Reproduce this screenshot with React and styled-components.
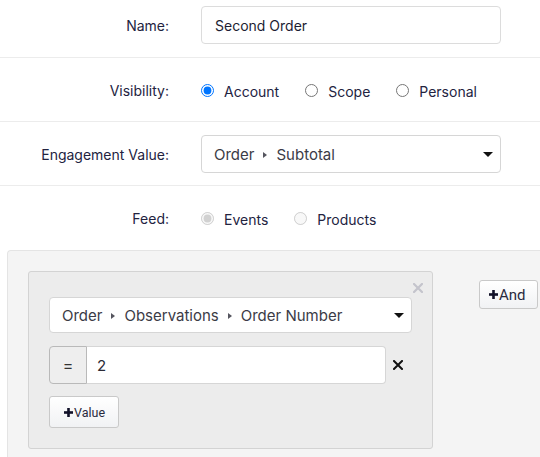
import React from "react";
import styled, { createGlobalStyle } from "styled-components";

const Global = createGlobalStyle`
  html, body { margin: 0; padding: 0; background: #fff; }
  body { font-family: Inter, "Noto Sans", sans-serif; color: #23233f; }
  * { box-sizing: border-box; }
`;

const Page = styled.div`
  width: 540px;
  height: 457px;
  overflow: hidden;
`;

const Row = styled.div`
  display: grid;
  grid-template-columns: 169px 300px;
  column-gap: 32px;
  align-items: center;
  padding: ${(p) => (p.$first ? "6px 0 13px" : p.$last ? "13px 0 13px" : "13px 0 12px")};
  border-bottom: ${(p) => (p.$last ? "none" : "1px solid #ececec")};
`;

const Label = styled.div`
  text-align: right;
  font-size: 14px;
  color: #23233f;
  margin-top: ${(p) => p.$offset || 0}px;
`;

const TextInput = styled.div`
  height: 38px;
  border: 1px solid #dcdcdc;
  border-radius: 4px;
  background: #fff;
  display: flex;
  align-items: center;
  padding: 0 13px;
  font-size: 14px;
  color: #1d1d33;
`;

const Select = styled.div`
  height: ${(p) => p.$h || 38}px;
  width: ${(p) => (p.$w ? `${p.$w}px` : "auto")};
  border: 1px solid #d6d6d6;
  border-radius: 4px;
  background: #fff;
  display: flex;
  align-items: center;
  justify-content: space-between;
  padding: 0 7px 0 12px;
  font-size: 15px;
  color: #3b3b46;
`;

const Path = styled.span`
  display: flex;
  align-items: center;
`;

const Sep = styled.span`
  display: inline-block;
  width: 0;
  height: 0;
  border-top: 3px solid transparent;
  border-bottom: 3px solid transparent;
  border-left: 4px solid #55555f;
  margin: 1px 9px 0 9px;
`;

const Caret = styled.span`
  width: 0;
  height: 0;
  border-left: 5px solid transparent;
  border-right: 5px solid transparent;
  border-top: 5px solid #111;
  margin-top: 1px;
`;

const RadioGroup = styled.div`
  height: 38px;
  display: flex;
  align-items: center;
  gap: 26px;
`;

const Option = styled.label`
  display: flex;
  align-items: center;
  gap: 10px;
  font-size: 14px;
  color: #23233f;
`;

const OptionText = styled.span`
  margin-top: ${(p) => p.$offset || 0}px;
`;

const Radio = styled.input.attrs({ type: "radio" })`
  margin: 0;
  width: 13px;
  height: 13px;
`;

const Section = styled.div`
  margin-left: 7px;
  min-height: 220px;
  background: #f4f4f4;
  border: 1px solid #e4e4e4;
  border-right: none;
  border-radius: 4px 0 0 0;
  padding: 20px;
  display: flex;
  align-items: flex-start;
  gap: 46px;
`;

const Clause = styled.div`
  position: relative;
  width: 405px;
  background: #ececec;
  border: 1px solid #d3d3d3;
  border-radius: 3px;
  padding: 25px 20px 20px;
  display: flex;
  flex-direction: column;
  align-items: flex-start;
`;

const CloseBtn = styled.span`
  position: absolute;
  top: 11px;
  right: 9px;
  display: flex;
`;

const ValueRow = styled.div`
  display: flex;
  align-items: center;
  gap: 7px;
  margin-top: 13px;
`;

const InputGroup = styled.div`
  display: flex;
  width: 337px;
  height: 38px;
`;

const Addon = styled.div`
  width: 38px;
  background: #eeeeee;
  border: 1px solid #b9b9b9;
  border-radius: 4px 0 0 4px;
  display: flex;
  align-items: center;
  justify-content: center;
  font-size: 16px;
  color: #333;
`;

const ValueInput = styled.div`
  flex: 1;
  background: #fff;
  border: 1px solid #d6d6d6;
  border-left: none;
  border-radius: 0 4px 4px 0;
  display: flex;
  align-items: center;
  padding: 0 10px;
  font-size: 15px;
  color: #2b2b36;
`;

const Button = styled.button`
  display: flex;
  align-items: center;
  height: ${(p) => p.$h}px;
  padding: 0 ${(p) => p.$pr}px 0 ${(p) => p.$pl}px;
  margin-top: ${(p) => p.$mt || 0}px;
  background: linear-gradient(#ffffff, #f1f2f4);
  border: 1px solid #c9c9c9;
  border-radius: 3px;
  font-family: Roboto, "Liberation Sans", sans-serif;
  font-size: ${(p) => p.$fs}px;
  color: #2a2a3e;
  cursor: pointer;
`;

const Plus = ({ size = 9 }) => (
  <svg width={size} height={size} viewBox="0 0 9 9" style={{ marginRight: 1 }}>
    <rect x="3.2" y="0" width="2.6" height="9" fill="#111128" />
    <rect x="0" y="3.2" width="9" height="2.6" fill="#111128" />
  </svg>
);

const XIcon = ({ size, color, w }) => (
  <svg width={size} height={size} viewBox="0 0 10 10">
    <path d="M1 1 L9 9 M9 1 L1 9" stroke={color} strokeWidth={w} strokeLinecap="square" />
  </svg>
);

const PathText = ({ parts }) => (
  <Path>
    {parts.map((p, i) => (
      <React.Fragment key={i}>
        {i > 0 && <Sep />}
        <span>{p}</span>
      </React.Fragment>
    ))}
  </Path>
);

export default function App() {
  return (
    <Page>
      <Global />
      <Row $first>
        <Label>Name:</Label>
        <TextInput>Second Order</TextInput>
      </Row>
      <Row>
        <Label>Visibility:</Label>
        <RadioGroup>
          <Option>
            <Radio name="vis" defaultChecked />
            <OptionText $offset={3}>Account</OptionText>
          </Option>
          <Option>
            <Radio name="vis" />
            <OptionText $offset={3}>Scope</OptionText>
          </Option>
          <Option>
            <Radio name="vis" />
            <OptionText $offset={3}>Personal</OptionText>
          </Option>
        </RadioGroup>
      </Row>
      <Row>
        <Label>Engagement Value:</Label>
        <Select>
          <PathText parts={["Order", "Subtotal"]} />
          <Caret />
        </Select>
      </Row>
      <Row $last>
        <Label>Feed:</Label>
        <RadioGroup>
          <Option>
            <Radio name="feed" defaultChecked disabled />
            <OptionText $offset={2}>Events</OptionText>
          </Option>
          <Option>
            <Radio name="feed" disabled />
            <OptionText $offset={2}>Products</OptionText>
          </Option>
        </RadioGroup>
      </Row>
      <Section>
        <Clause>
          <CloseBtn>
            <XIcon size={10} color="#c4c4cc" w={2.2} />
          </CloseBtn>
          <Select $w={363} $h={36}>
            <PathText parts={["Order", "Observations", "Order Number"]} />
            <Caret />
          </Select>
          <ValueRow>
            <InputGroup>
              <Addon>=</Addon>
              <ValueInput>2</ValueInput>
            </InputGroup>
            <XIcon size={10} color="#111" w={2} />
          </ValueRow>
          <Button $h={32} $pl={14} $pr={13} $fs={12.5} $mt={12}>
            <Plus />
            Value
          </Button>
        </Clause>
        <Button $h={29} $pl={9} $pr={11} $fs={15} $mt={9}>
          <Plus />
          And
        </Button>
      </Section>
    </Page>
  );
}
